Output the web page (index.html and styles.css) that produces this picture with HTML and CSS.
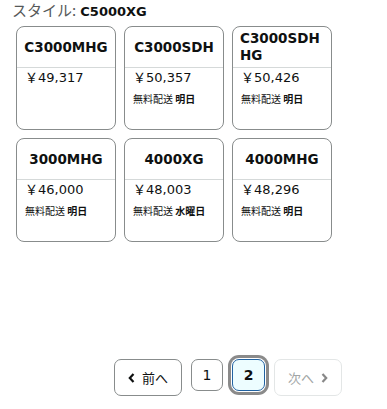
FILE: index.html
```html
<!DOCTYPE html>
<html lang="ja">
<head>
<meta charset="utf-8">
<link rel="stylesheet" href="styles.css">
</head>
<body>
<div class="page">
  <div class="style-label"><span class="key">スタイル:</span> <span class="val">C5000XG</span></div>
  <div class="grid">
    <div class="card">
      <div class="card-head"><span class="title">C3000MHG</span></div>
      <div class="card-body"><div class="price">￥49,317</div></div>
    </div>
    <div class="card">
      <div class="card-head"><span class="title">C3000SDH</span></div>
      <div class="card-body"><div class="price">￥50,357</div><div class="ship">無料配送 <b>明日</b></div></div>
    </div>
    <div class="card">
      <div class="card-head"><span class="title">C3000SDHHG</span></div>
      <div class="card-body"><div class="price">￥50,426</div><div class="ship">無料配送 <b>明日</b></div></div>
    </div>
    <div class="card">
      <div class="card-head"><span class="title">3000MHG</span></div>
      <div class="card-body"><div class="price">￥46,000</div><div class="ship">無料配送 <b>明日</b></div></div>
    </div>
    <div class="card">
      <div class="card-head"><span class="title">4000XG</span></div>
      <div class="card-body"><div class="price">￥48,003</div><div class="ship">無料配送 <b>水曜日</b></div></div>
    </div>
    <div class="card">
      <div class="card-head"><span class="title">4000MHG</span></div>
      <div class="card-body"><div class="price">￥48,296</div><div class="ship">無料配送 <b>明日</b></div></div>
    </div>
  </div>
  <div class="pager">
    <button class="pbtn nav"><svg class="chev" width="7" height="10" viewBox="0 0 7 10"><path d="M5.5 1 L1.8 5 L5.5 9" fill="none" stroke="#0f1111" stroke-width="2.2"/></svg><span>前へ</span></button>
    <button class="pbtn num">1</button>
    <button class="pbtn num current">2</button>
    <button class="pbtn nav disabled"><span>次へ</span><svg class="chev" width="7" height="10" viewBox="0 0 7 10"><path d="M1.5 1 L5.2 5 L1.5 9" fill="none" stroke="#888" stroke-width="2.2"/></svg></button>
  </div>
</div>
</body>
</html>
```
FILE: styles.css
```css
html, body {
  margin: 0;
  padding: 0;
  background: #fff;
}
body {
  font-family: "DejaVu Sans", "Noto Sans CJK JP", sans-serif;
  color: #0f1111;
}
.page {
  width: 387px;
}
.style-label {
  padding-left: 12px;
  font-size: 13px;
  line-height: 20px;
  height: 20px;
}
.style-label .key {
  color: #565959;
  font-family: "Noto Sans CJK JP", sans-serif;
  font-weight: normal;
  font-size: 15px;
}
.style-label .val {
  font-weight: bold;
}
.grid {
  display: grid;
  grid-template-columns: repeat(3, 100px);
  grid-auto-rows: 104px;
  gap: 8px;
  margin: 6px 0 0 16px;
}
.card {
  border: 1px solid #888c8c;
  border-radius: 8px;
  box-sizing: border-box;
  display: flex;
  flex-direction: column;
}
.card-head {
  height: 40px;
  border-bottom: 1px solid #d5d9d9;
  display: flex;
  align-items: center;
  justify-content: center;
  padding: 0 7px;
}
.title {
  font-size: 13.5px;
  font-weight: bold;
  line-height: 17px;
  text-align: left;
  word-break: break-all;
}
.card-body {
  padding: 1px 8px 0 8px;
}
.price {
  font-size: 13px;
  line-height: 18px;
}
.ship {
  font-family: "Noto Sans CJK JP", sans-serif;
  font-size: 10px;
  line-height: 14px;
  margin-top: 5px;
  color: #0f1111;
}
.ship b {
  font-weight: bold;
}
.pager {
  display: flex;
  align-items: flex-start;
  gap: 9px;
  margin-top: 117px;
  padding-left: 114px;
}
.pbtn {
  font-family: "DejaVu Sans", "Noto Sans CJK JP", sans-serif;
  background: #fff;
  border: 1px solid #888c8c;
  border-radius: 7px;
  color: #0f1111;
  padding: 0;
  margin: 0;
  display: flex;
  align-items: center;
  justify-content: center;
  box-sizing: border-box;
}
.pbtn.nav {
  width: 68px;
  height: 37px;
  gap: 7px;
  font-size: 13px;
  font-family: "Noto Sans CJK JP", sans-serif;
}
.pbtn.num {
  width: 32px;
  height: 32px;
  font-size: 14px;
}
.pbtn.current {
  width: 33px;
  background: #edfdff;
  border-color: #2162a1;
  font-weight: bold;
  box-shadow: 0 0 0 1px #fff, 0 0 0 4px #8a8a8a;
}
.pbtn.disabled {
  border-color: #e3e6e6;
  color: #a2a6a6;
}
.chev {
  display: block;
}
```
